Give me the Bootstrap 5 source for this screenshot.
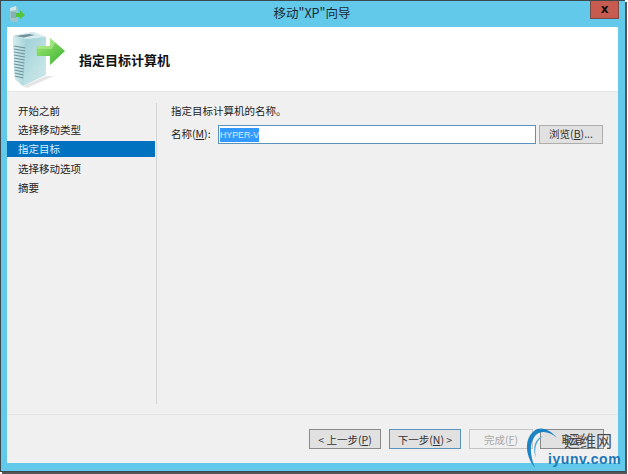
<!doctype html>
<html lang="zh"><head><meta charset="utf-8">
<title>移动"XP"向导</title>
<link rel="stylesheet" href="https://cdn.jsdelivr.net/npm/bootstrap@5.3.0/dist/css/bootstrap.min.css">
<style>
html,body{height:474px;overflow:hidden;background:#fff}
body{font-family:"Noto Sans CJK SC","Liberation Sans",sans-serif;font-size:10.5px;line-height:1.2;color:#222}
.frame{width:625px;height:472px;background:#62c9ea;border:1px solid #3c4a50;border-right-width:0;box-shadow:2px 2px 0 #555;position:relative;padding:0 7px 7px 6px}
.titlebar{height:26px;position:relative}
.ttl{font-size:12.5px;color:#1a2a33;padding-top:4px;padding-right:1px}
.closer{position:absolute;right:-1px;top:0;width:29px;height:18px;background:#c75b50;border:1px solid #7b4a45;border-top:0;color:#111;font:bold 12px/16px "DejaVu Sans",sans-serif;text-align:center}
.appico{position:absolute;left:2px;top:4px}
.panel{height:436px;background:#f0f0f0}
.hdr{height:65px;background:#fff;border-bottom:1px solid #e6e6e6;padding:2px 0 0 6px;gap:8px}
.hdr h1{font-size:13px;font-weight:700;color:#111;margin:0;padding-top:23px}
.mid{height:322px}
.side{width:149px;padding-top:9px;flex:none}
.step{height:19px;padding-left:11px;line-height:19px;color:#222;white-space:nowrap}
.step.act{background:#0072c0;color:#dbeeff;height:16px;line-height:16px;margin:2px 1px 2px 0}
.content{margin-top:11px;border-left:1px solid #d4d4d4;height:301px;flex:1;padding:2px 15px 0 14px}
.row-f{gap:3px;margin-top:7px}
.lab{width:44px;flex:none;padding-top:3px}
.ipt{width:318px;height:19px;background:#fff;border:1px solid #5a93bd;padding:1px;flex:none;line-height:14px}
.sel{background:#3399ff;color:#dcecff;font-family:"Liberation Sans",sans-serif;font-size:8.8px;display:inline-block;height:14px}
.wbtn{height:20px;background:#e1e1e1;border:1px solid #adadad;border-radius:0;color:#333;padding:0;font-size:10.5px;line-height:17px;--bs-btn-border-color:#adadad;flex:none}
.wbtn.brw{width:64px;height:19px;line-height:16px}
.wbtn.wide{width:72px;border-color:#8a8a8a}
.wbtn.nxt{border-color:#5a93bd}
.wbtn.dis{width:64px;background:#f0f0f0;color:#a8a8a8;border-color:#c4c4c4;opacity:1}
.wbtn.nar{width:64px;border-color:#8a8a8a}
.foot{border-top:1px solid #e4e4e4;height:48px;padding:14px 14px 0 0;gap:8px}
.foot .wbtn.nar{margin-left:-1px}
.mark-w{position:absolute;left:520px;top:420px;width:108px;height:54px;pointer-events:none}
.mark-cn{position:absolute;left:44px;top:9px;font-size:16px;line-height:22px;color:#4a4a4a;white-space:nowrap}
.mark-en{position:absolute;left:28px;top:31px;font:700 14px/16px "Liberation Sans",sans-serif;color:#1c76b8;letter-spacing:.55px;white-space:nowrap}
</style></head>
<body>
<div class="frame">
  <div class="titlebar text-center">
    <svg class="appico" width="16" height="18" viewBox="0 0 16 18"><path d="M1 3 7 1 9 3V17H3L1 15Z" fill="#9cc7c9"/><path d="M1 3 7 1V5L1 6Z" fill="#cfe5e6"/><path d="M2 8H7M2 10H7M2 12H7" stroke="#6f9aa0"/><path d="M7 8H11V5L16 10 11 14V12H7Z" fill="#55c43c"/></svg>
    <div class="ttl">移动"XP"向导</div>
    <div class="closer">x</div>
  </div>
  <div class="panel d-flex flex-column">
    <div class="hdr d-flex">
      <svg width="58" height="62" viewBox="0 0 58 62">
        <defs>
          <linearGradient id="gf" x1="0" x2="1" y1="0" y2="0"><stop offset="0" stop-color="#d6eef0"/><stop offset="1" stop-color="#a5d3d8"/></linearGradient>
          <linearGradient id="gs" x1="0" x2="1" y1="0" y2="1"><stop offset="0" stop-color="#8cc8d0"/><stop offset="1" stop-color="#d5ecee"/></linearGradient>
          <linearGradient id="ga" x1="0" x2="1" y1="0" y2="1"><stop offset="0" stop-color="#a6ea7a"/><stop offset="1" stop-color="#38b22e"/></linearGradient>
        </defs>
        <path d="M10 57 33 47 41 47 14 59Z" fill="#e6e6e6"/>
        <path d="M0 7 20 3 33 8V46L10 57 2 50Z" fill="url(#gs)"/>
        <path d="M0 7 13 10 10 57 2 50Z" fill="url(#gf)"/>
        <path d="M0 7 20 3 33 8 13 10Z" fill="#d9eced"/>
        <path d="M2 7 16 5 22 6 11 8.500Z" fill="#6f8f98"/>
        <path d="M1 17 12.400 19M1 20 12.200 22M1 23 12 25M1 26 11.800 28M1 29 11.600 31M1 32 11.400 34M1 35 11.200 37M1.200 38 11 40M1.400 41 10.800 43M1.600 44 10.600 46M1.800 47 10.400 49" stroke="#6d8f98" stroke-width="1.100"/>
        <path d="M16 47 31 39M16 50 31 42M16 53 31 45" stroke="#bfe0e2" stroke-width="1"/>
        <path d="M24 17 H37 V9 L52 22 37 36 V27 H24 Q23 22 24 17Z" fill="url(#ga)"/>
        <path d="M24 17 H37 V9 L42 14 39 20 H25Z" fill="#c4f2a0" opacity=".5"/>
      </svg>
      <h1>指定目标计算机</h1>
    </div>
    <div class="mid d-flex">
      <div class="side">
        <div class="step">开始之前</div>
        <div class="step">选择移动类型</div>
        <div class="step act">指定目标</div>
        <div class="step">选择移动选项</div>
        <div class="step">摘要</div>
      </div>
      <div class="content">
        <div>指定目标计算机的名称。</div>
        <div class="d-flex row-f align-items-start">
          <div class="lab">名称(<u>M</u>):</div>
          <div class="ipt"><span class="sel">HYPER-V</span></div>
          <button class="btn wbtn brw" type="button">浏览(<u>B</u>)...</button>
        </div>
      </div>
    </div>
    <div class="foot d-flex justify-content-end">
      <button class="btn wbtn wide" type="button">&lt; 上一步(<u>P</u>)</button>
      <button class="btn wbtn wide nxt" type="button">下一步(<u>N</u>) &gt;</button>
      <button class="btn wbtn dis" type="button" disabled>完成(<u>F</u>)</button>
      <button class="btn wbtn nar" type="button">取消</button>
    </div>
  </div>
</div>
<div class="mark-w">
  <svg class="position-absolute top-0 start-0" width="50" height="52" viewBox="0 0 50 52"><path d="M37 18C30 9 20 6 14 11 5 18 4 34 15 48 10 35 9 24 15 16 20 10 29 11 37 18Z" fill="#1c83c4"/><path d="M23 16C15 18 12 28 16 38 14 28 16 21 23 16Z" fill="#4aa7d9"/></svg>
  <div class="mark-cn">运维网</div>
  <div class="mark-en">iyunv.com</div>
</div>
</body></html>
